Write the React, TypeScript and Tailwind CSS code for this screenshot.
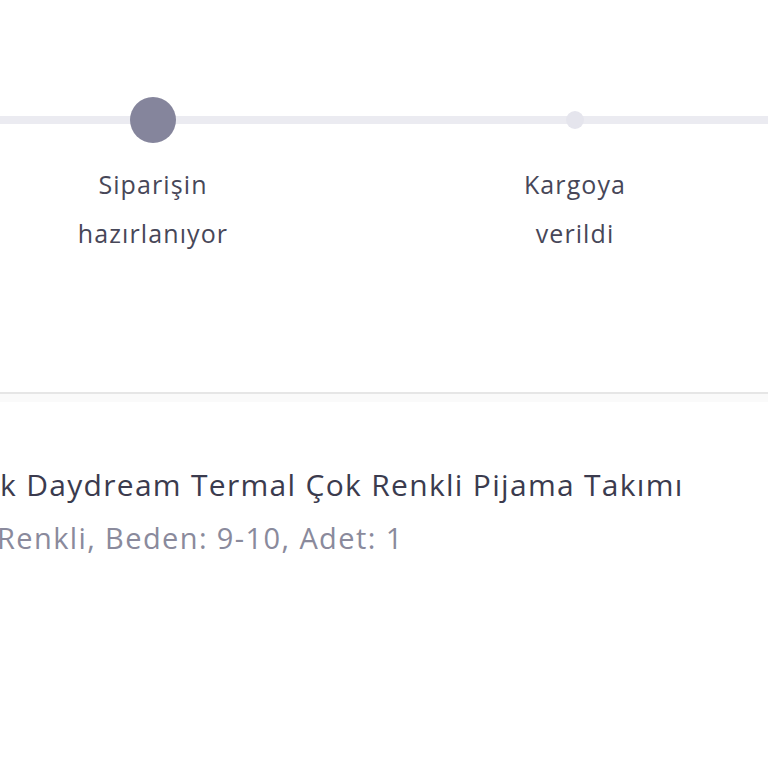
import React from 'react';

const steps = [
  { label: ['Siparişin', 'hazırlanıyor'], active: true },
  { label: ['Kargoya', 'verildi'], active: false },
];

export default function App() {
  return (
    <div
      className="w-[768px] h-[768px] overflow-hidden bg-white"
      style={{ fontFamily: '"Open Sans", "Liberation Sans", sans-serif' }}
    >
      <div className="pt-[97px] h-[392px]">
        <div className="relative">
          <div className="absolute left-0 right-0 top-[19px] h-[8px] bg-[#ebebf1]" />
          <div className="relative flex ml-[-58px]">
            {steps.map((s, i) => (
              <div key={i} className="w-[422px] shrink-0 flex flex-col items-center">
                <div className="h-[46px] flex items-center justify-center">
                  {s.active ? (
                    <div className="w-[46px] h-[46px] rounded-full bg-[#85859c]" />
                  ) : (
                    <div className="w-[18px] h-[18px] rounded-full bg-[#e5e5ed]" />
                  )}
                </div>
                <div className="mt-[17px] text-[25px] leading-[49px] text-[#474758] text-center tracking-[1.1px]">
                  <div>{s.label[0]}</div>
                  <div>{s.label[1]}</div>
                </div>
              </div>
            ))}
          </div>
        </div>
      </div>
      <div className="h-[2px] bg-[#e6e6e6]" />
      <div className="h-[8px] bg-[#fafafa]" />
      <div className="pt-[63px]">
        <div className="text-[30px] leading-[40px] text-[#3b3b4e] whitespace-nowrap tracking-[1.3px]">
          k Daydream Termal Çok Renkli Pijama Takımı
        </div>
        <div className="mt-[16px] ml-[-3px] text-[29px] leading-[34px] text-[#8a8a9c] whitespace-nowrap tracking-[1.4px]">
          Renkli, Beden: 9-10, Adet: 1
        </div>
      </div>
    </div>
  );
}
